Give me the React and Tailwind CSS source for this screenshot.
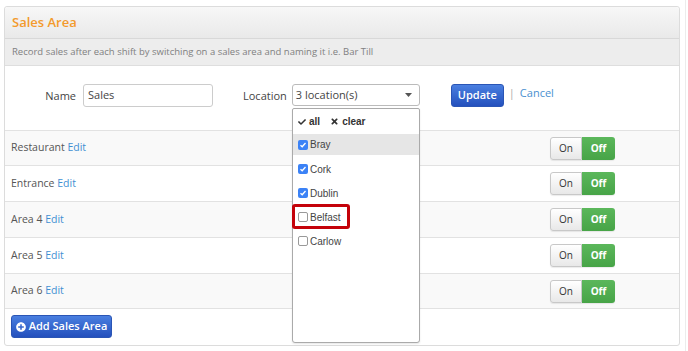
import React from "react";
import { FaCheck, FaTimes, FaPlusCircle } from "react-icons/fa";

const rows = [
  { name: "Restaurant", h: "h-[35px]", bg: "bg-[#f9f9f9]" },
  { name: "Entrance", h: "h-[36px]", bg: "bg-white" },
  { name: "Area 4", h: "h-[36px]", bg: "bg-[#f9f9f9]" },
  { name: "Area 5", h: "h-[36px]", bg: "bg-white" },
  { name: "Area 6", h: "h-[35px]", bg: "bg-[#f9f9f9]" },
];

const items = [
  { name: "Cork", checked: true },
  { name: "Dublin", checked: true },
  { name: "Belfast", checked: false },
  { name: "Carlow", checked: false },
];

function Toggle() {
  return (
    <div className="flex h-[23px] text-[10px] rounded-[3px] shadow-[0_1px_1px_rgba(0,0,0,0.08)]">
      <div className="w-[32px] flex items-center justify-center border border-[#c8c8c8] rounded-l-[3px] bg-gradient-to-b from-white to-[#e8e8e8] text-[#333]">
        On
      </div>
      <div className="w-[33px] flex items-center justify-center rounded-r-[3px] bg-gradient-to-b from-[#5bb75b] to-[#47a447] text-white font-bold">
        Off
      </div>
    </div>
  );
}

function Check({ checked }) {
  return checked ? (
    <span className="w-[10px] h-[10px] shrink-0 rounded-[2px] bg-[#3b82f6] flex items-center justify-center">
      <svg width="8" height="8" viewBox="0 0 8 8">
        <path d="M1.5 4.2 L3.2 5.8 L6.5 2" stroke="white" strokeWidth="1.3" fill="none" />
      </svg>
    </span>
  ) : (
    <span className="w-[10px] h-[10px] shrink-0 rounded-[2px] bg-white border border-[#999]" />
  );
}

export default function App() {
  return (
    <div className="w-[688px] h-[351px] bg-white pt-[6px] pl-[4px] relative font-['Open_Sans',sans-serif] overflow-hidden">
      <div className="absolute right-[2px] top-0 bottom-0 w-px bg-[#ececec]" />
      <div className="w-[676px] h-[340px] border border-[#dcdcdc] rounded-[3px] relative flex flex-col">
        <div className="h-[32px] bg-gradient-to-b from-[#f7f7f7] to-[#e9e9e9] border-b border-[#d8d8d8] flex items-center pl-[7px] rounded-t-[3px]">
          <span className="text-[13px] font-semibold text-[#f39a2c]">Sales Area</span>
        </div>
        <div className="h-[27px] bg-[#ededed] border-b border-[#dedede] flex items-center pl-[7px]">
          <span className="text-[9.5px] text-[#808080]">
            Record sales after each shift by switching on a sales area and naming it i.e. Bar Till
          </span>
        </div>
        <div className="h-[65px] bg-white border-b border-[#e2e2e2] flex items-start pt-[18px]">
          <div className="w-[71px] text-right text-[11px] text-[#444] mt-[4px]">Name</div>
          <div className="ml-[7px] w-[130px] h-[23px] border border-[#ccc] rounded-[3px] flex items-center pl-[4px] text-[11px] text-[#444]">
            Sales
          </div>
          <div className="ml-[30px] text-[11px] text-[#444] mt-[4px]">Location</div>
          <div className="ml-[5px] w-[128px] h-[22px] border border-[#bbb] rounded-[3px] flex items-center pl-[3px] pr-[7px] text-[11px] text-[#444] justify-between">
            <span>3 location(s)</span>
            <svg width="7" height="4" viewBox="0 0 7 4">
              <path d="M0 0 L7 0 L3.5 4 Z" fill="#555" />
            </svg>
          </div>
          <div className="ml-[31px] w-[53px] h-[23px] rounded-[3px] bg-gradient-to-b from-[#4a7fe0] to-[#2450bd] border border-[#2a55b5] flex items-center justify-center text-white text-[11px] font-semibold">
            Update
          </div>
          <span className="ml-[5px] text-[#aaa] text-[11px] mt-[1px]">|</span>
          <span className="ml-[5px] text-[#4a90d0] text-[11px] mt-[1px]">Cancel</span>
        </div>
        {rows.map((r) => (
          <div key={r.name} className={`${r.h} ${r.bg} border-b border-[#e2e2e2] flex items-center pl-[6px] pr-[64px] justify-between`}>
            <span className="text-[10.5px] text-[#555]">
              {r.name} <span className="text-[#3f8fd2]">Edit</span>
            </span>
            <Toggle />
          </div>
        ))}
        <div className="flex-1 flex items-start pl-[6px] pt-[6px]">
          <div className="h-[23px] w-[101px] rounded-[3px] bg-gradient-to-b from-[#4a7fe0] to-[#2450bd] border border-[#2a55b5] flex items-center justify-center gap-[3px] text-white text-[11px] font-semibold">
            <FaPlusCircle className="text-[10px]" />
            <span>Add Sales Area</span>
          </div>
        </div>

        <div className="absolute left-[287px] top-[101px] w-[128px] h-[235px] bg-white border border-[#aaa] rounded-b-[3px] rounded-t-[2px] font-['Liberation_Sans',Arial,sans-serif] text-[10px] text-[#444] shadow-[0_1px_2px_rgba(0,0,0,0.1)]">
          <div className="h-[25px] flex items-center pl-[5px] gap-[10px] font-bold text-[#333]">
            <span className="flex items-center gap-[3px]"><FaCheck className="text-[8px]" />all</span>
            <span className="flex items-center gap-[3px]"><FaTimes className="text-[9px]" />clear</span>
          </div>
          <div className="h-[21px] bg-[#e6e6e6] flex items-center pl-[5px] gap-[2px] mb-[2px]">
            <Check checked />
            <span>Bray</span>
          </div>
          {items.map((it) => (
            <div key={it.name} className="h-[24px] flex items-center pl-[5px] gap-[2px]">
              <Check checked={it.checked} />
              <span>{it.name}</span>
            </div>
          ))}
          <div className="absolute left-[-1px] top-[95px] w-[58px] h-[25px] border-[3px] border-[#c4020a] rounded-[3px]" />
        </div>
      </div>
    </div>
  );
}
